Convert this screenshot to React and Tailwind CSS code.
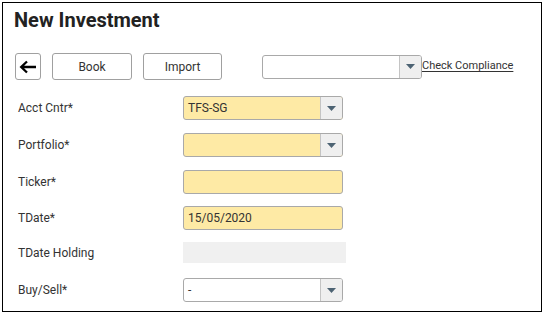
import React from "react";

function Caret() {
    return (
        <svg width="9" height="5" viewBox="0 0 9 5" className="block">
            <path d="M0 0 H9 L4.5 5 Z" fill="#4d6373" />
        </svg>
    );
}

function SelectBox({ value, className = "", width = "w-[160px]" }) {
    return (
        <div
            className={`flex h-[24px] ${width} items-stretch overflow-hidden rounded-[3px] border border-[#a9a9a9] ${className}`}
        >
            <div className="flex flex-1 items-center pl-[4px] text-[12px] text-[#333]">{value}</div>
            <div className="flex w-[22px] items-center justify-center border-l border-[#c4c4c4] bg-[#efefef]">
                <Caret />
            </div>
        </div>
    );
}

function TextBox({ value, className = "" }) {
    return (
        <div
            className={`flex h-[24px] w-[160px] items-center rounded-[3px] border border-[#a9a9a9] pl-[4px] text-[12px] text-[#333] ${className}`}
        >
            {value}
        </div>
    );
}

function Row({ label, children, className = "" }) {
    return (
        <div className={`flex items-center ${className}`}>
            <div className="w-[165px] shrink-0 text-[12px] text-[#333]">{label}</div>
            {children}
        </div>
    );
}

export default function App() {
    const yellow = "bg-[#feeaa5]";

    return (
        <div className="h-[314px] w-[544px] bg-white pl-[2px] pt-[2px] font-['Roboto',sans-serif]">
            <div className="h-[310px] w-[540px] border border-black">
                <h1 className="pl-[11px] pt-[5px] text-[20px] font-bold leading-[24px] text-[#222]">
                    New Investment
                </h1>

                <div className="mt-[21px] flex items-center pl-[12px]">
                    <button className="flex h-[27px] w-[26px] items-center justify-center rounded-[3px] border border-[#a0a0a0] bg-white">
                        <svg width="18" height="14" viewBox="0 0 18 14">
                            <path
                                d="M17 7 H2.5 M8 1.5 L2.2 7 L8 12.5"
                                stroke="#000"
                                strokeWidth="2.3"
                                fill="none"
                            />
                        </svg>
                    </button>
                    <button className="ml-[11px] h-[27px] w-[80px] rounded-[3px] border border-[#a0a0a0] bg-white text-[12px] text-[#333]">
                        Book
                    </button>
                    <button className="ml-[11px] h-[27px] w-[79px] rounded-[3px] border border-[#a0a0a0] bg-white text-[12px] text-[#333]">
                        Import
                    </button>
                    <SelectBox value="" width="w-[160px]" className="ml-[40px] h-[23px] bg-white" />
                    <a className="text-[11px] text-[#333] underline underline-offset-[2px]">
                        Check Compliance
                    </a>
                </div>

                <div className="mt-[16px] pl-[15px]">
                    <Row label="Acct Cntr*">
                        <SelectBox value="TFS-SG" className={yellow} />
                    </Row>
                    <Row label="Portfolio*" className="mt-[13px]">
                        <SelectBox value="" className={yellow} />
                    </Row>
                    <Row label="Ticker*" className="mt-[13px]">
                        <TextBox value="" className={yellow} />
                    </Row>
                    <Row label="TDate*" className="mt-[12px]">
                        <TextBox value="15/05/2020" className={yellow} />
                    </Row>
                    <Row label="TDate Holding" className="mt-[12px]">
                        <div className="h-[21px] w-[163px] bg-[#f0f0f0]" />
                    </Row>
                    <Row label="Buy/Sell*" className="mt-[15px]">
                        <SelectBox value="-" className="bg-white" />
                    </Row>
                </div>
            </div>
        </div>
    );
}
